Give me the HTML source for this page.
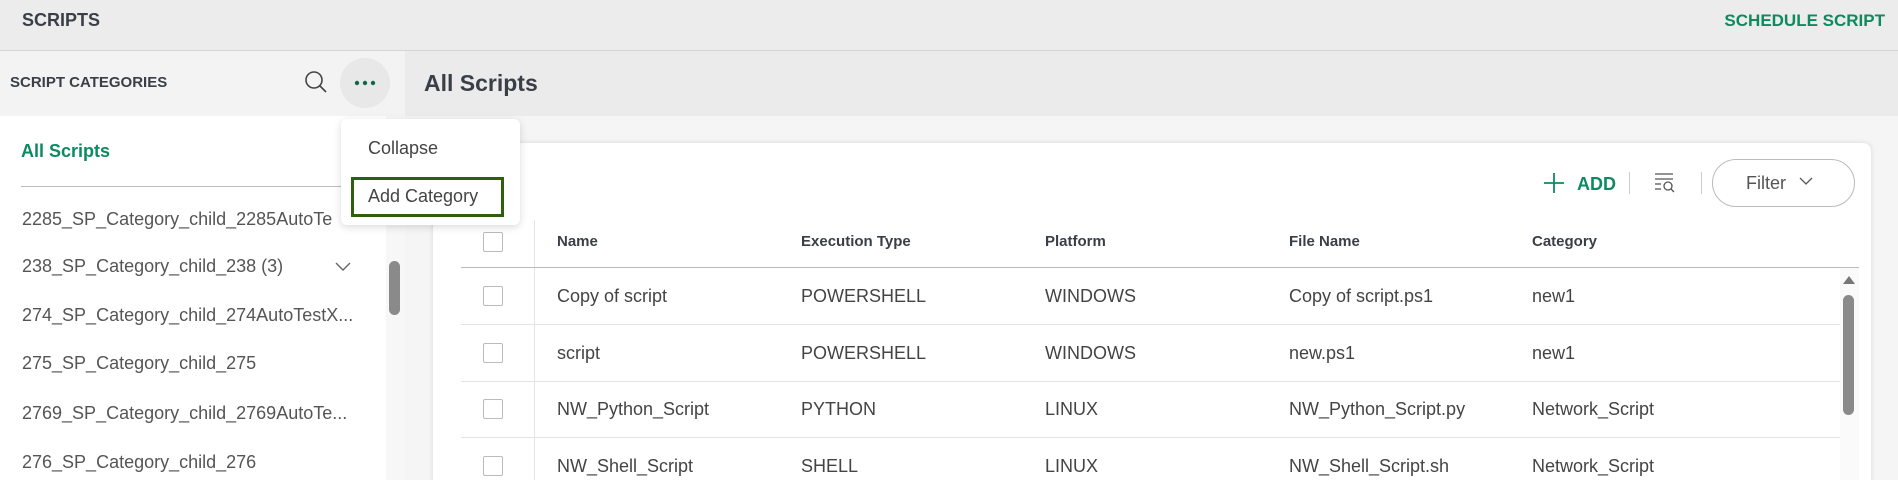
<!DOCTYPE html>
<html><head><meta charset="utf-8"><style>
*{box-sizing:border-box;margin:0;padding:0}
html,body{width:1898px;height:480px;overflow:hidden}
body{font-family:"Liberation Sans",sans-serif;background:#f5f5f5;color:#444}
#wrap{position:relative;width:1898px;height:480px;overflow:hidden}
.abs{position:absolute}
.top{left:0;top:0;width:1898px;height:51px;background:#ececec;border-bottom:1px solid #d6d6d6}
.band{left:405px;top:51px;width:1493px;height:65px;background:#ebebeb}
.side{left:0;top:51px;width:405px;height:429px;background:#fff;border-right:1px solid #e2e2e2}
.sidehead{left:0;top:51px;width:405px;height:65px;background:#f3f3f3}
.item{left:22px;font-size:18px;color:#555;white-space:nowrap}
.card{left:433px;top:143px;width:1438px;height:345px;background:#fff;border-radius:8px;box-shadow:0 0 6px rgba(0,0,0,.12)}
.th{font-weight:bold;font-size:15px;color:#3a3f47;top:233px}
.td{font-size:18px;color:#444;white-space:nowrap}
.cb{width:20px;height:20px;border:1px solid #bbb;border-radius:2px;left:483px;background:#fff}
.hl{height:1px;background:#e4e4e4;left:461px;width:1379px}
</style></head><body><div id="wrap">
<div class="abs top"></div>
<div class="abs" style="left:22px;top:10px;font-size:18px;font-weight:bold;color:#3a3f47">SCRIPTS</div>
<div class="abs" style="right:13px;top:11px;font-size:17px;font-weight:bold;color:#0f8a5f">SCHEDULE SCRIPT</div>
<div class="abs band"></div>
<div class="abs side"></div>
<div class="abs sidehead"></div>
<div class="abs" style="left:10px;top:74px;font-size:15px;font-weight:bold;color:#3a3f47">SCRIPT CATEGORIES</div>
<svg class="abs" style="left:304px;top:70px" width="24" height="24" viewBox="0 0 24 24"><circle cx="10" cy="10" r="8" fill="none" stroke="#444" stroke-width="1.6"/><line x1="16" y1="16" x2="22" y2="22" stroke="#444" stroke-width="1.6"/></svg>
<div class="abs" style="left:340px;top:58px;width:50px;height:50px;border-radius:50%;background:#e8e8e8"></div>
<svg class="abs" style="left:354px;top:79px" width="22" height="8" viewBox="0 0 22 8"><circle cx="3" cy="4" r="2.2" fill="#0f6a4a"/><circle cx="11" cy="4" r="2.2" fill="#0f6a4a"/><circle cx="19" cy="4" r="2.2" fill="#0f6a4a"/></svg>
<div class="abs" style="left:424px;top:70px;font-size:23px;font-weight:bold;color:#3a3f47">All Scripts</div>
<div class="abs" style="left:21px;top:141px;font-size:18px;font-weight:bold;color:#0f8a5f">All Scripts</div>
<div class="abs" style="left:21px;top:186px;width:364px;height:1px;background:#bbb"></div>
<div class="abs item" style="top:209px">2285_SP_Category_child_2285AutoTe</div>
<div class="abs item" style="top:256px">238_SP_Category_child_238 (3)</div>
<svg class="abs" style="left:334px;top:261px" width="18" height="12" viewBox="0 0 18 12"><path d="M2 2 L9 9 L16 2" fill="none" stroke="#666" stroke-width="1.4"/></svg>
<div class="abs item" style="top:305px">274_SP_Category_child_274AutoTestX...</div>
<div class="abs item" style="top:353px">275_SP_Category_child_275</div>
<div class="abs item" style="top:403px">2769_SP_Category_child_2769AutoTe...</div>
<div class="abs item" style="top:452px">276_SP_Category_child_276</div>
<div class="abs" style="left:386px;top:116px;width:19px;height:364px;background:#f7f7f7"></div>
<div class="abs" style="left:389px;top:261px;width:11px;height:54px;border-radius:6px;background:#8a8a8a"></div>
<div class="abs card"></div>
<svg class="abs" style="left:1543px;top:172px" width="22" height="22" viewBox="0 0 22 22"><path d="M11 1 V21 M1 11 H21" stroke="#0f8a5f" stroke-width="1.8"/></svg>
<div class="abs" style="left:1577px;top:174px;font-size:18px;font-weight:bold;color:#0f8a5f">ADD</div>
<div class="abs" style="left:1629px;top:172px;width:1px;height:22px;background:#ccc"></div>
<svg class="abs" style="left:1654px;top:172px" width="22" height="22" viewBox="0 0 22 22"><g stroke="#555" stroke-width="1.3" fill="none"><line x1="1" y1="2" x2="19" y2="2"/><line x1="1" y1="7" x2="19" y2="7"/><line x1="1" y1="12" x2="7" y2="12"/><line x1="1" y1="17" x2="7" y2="17"/><circle cx="14" cy="14" r="4"/><line x1="17" y1="17" x2="20" y2="20"/></g></svg>
<div class="abs" style="left:1701px;top:172px;width:1px;height:22px;background:#ccc"></div>
<div class="abs" style="left:1712px;top:159px;width:143px;height:48px;border:1px solid #bbb;border-radius:24px"></div>
<div class="abs" style="left:1746px;top:173px;font-size:18px;color:#555">Filter</div>
<svg class="abs" style="left:1798px;top:176px" width="16" height="10" viewBox="0 0 16 10"><path d="M2 2 L8 8 L14 2" fill="none" stroke="#555" stroke-width="1.3"/></svg>
<div class="abs" style="left:534px;top:220px;width:1px;height:260px;background:#e4e4e4"></div>
<div class="abs cb" style="top:232px"></div>
<div class="abs th" style="left:557px">Name</div>
<div class="abs th" style="left:801px">Execution Type</div>
<div class="abs th" style="left:1045px">Platform</div>
<div class="abs th" style="left:1289px">File Name</div>
<div class="abs th" style="left:1532px">Category</div>
<div class="abs" style="left:461px;top:267px;width:1398px;height:1px;background:#b8bcc2"></div>
<div class="abs hl" style="top:324px"></div><div class="abs hl" style="top:381px"></div><div class="abs hl" style="top:437px"></div>
<div class="abs cb" style="top:286px"></div><div class="abs cb" style="top:343px"></div><div class="abs cb" style="top:399px"></div><div class="abs cb" style="top:456px"></div>
<div class="abs td" style="left:557px;top:286px">Copy of script</div><div class="abs td" style="left:801px;top:286px">POWERSHELL</div><div class="abs td" style="left:1045px;top:286px">WINDOWS</div><div class="abs td" style="left:1289px;top:286px">Copy of script.ps1</div><div class="abs td" style="left:1532px;top:286px">new1</div>
<div class="abs td" style="left:557px;top:343px">script</div><div class="abs td" style="left:801px;top:343px">POWERSHELL</div><div class="abs td" style="left:1045px;top:343px">WINDOWS</div><div class="abs td" style="left:1289px;top:343px">new.ps1</div><div class="abs td" style="left:1532px;top:343px">new1</div>
<div class="abs td" style="left:557px;top:399px">NW_Python_Script</div><div class="abs td" style="left:801px;top:399px">PYTHON</div><div class="abs td" style="left:1045px;top:399px">LINUX</div><div class="abs td" style="left:1289px;top:399px">NW_Python_Script.py</div><div class="abs td" style="left:1532px;top:399px">Network_Script</div>
<div class="abs td" style="left:557px;top:456px">NW_Shell_Script</div><div class="abs td" style="left:801px;top:456px">SHELL</div><div class="abs td" style="left:1045px;top:456px">LINUX</div><div class="abs td" style="left:1289px;top:456px">NW_Shell_Script.sh</div><div class="abs td" style="left:1532px;top:456px">Network_Script</div>
<div class="abs" style="left:1840px;top:268px;width:19px;height:212px;background:#fafafa"></div>
<svg class="abs" style="left:1842px;top:275px" width="14" height="10" viewBox="0 0 14 10"><path d="M1 9 L7 1 L13 9Z" fill="#777"/></svg>
<div class="abs" style="left:1843px;top:295px;width:11px;height:120px;border-radius:6px;background:#8a8a8a"></div>
<div class="abs" style="left:341px;top:119px;width:179px;height:106px;background:#fff;border-radius:6px;box-shadow:0 2px 8px rgba(0,0,0,.15)"></div>
<div class="abs" style="left:368px;top:138px;font-size:18px;color:#444">Collapse</div>
<div class="abs" style="left:351px;top:177px;width:153px;height:40px;border:3px solid #2d5f0c"></div>
<div class="abs" style="left:368px;top:186px;font-size:18px;color:#444">Add Category</div>
</div></body></html>
